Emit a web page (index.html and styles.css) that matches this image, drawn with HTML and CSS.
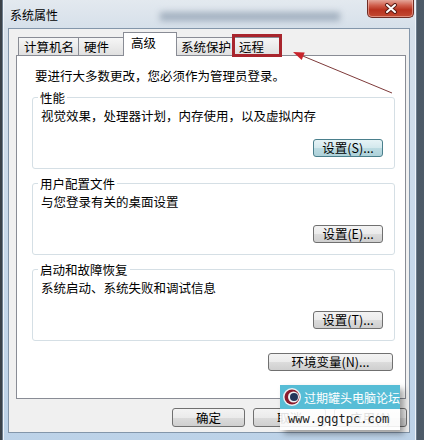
FILE: index.html
```html
<!DOCTYPE html>
<html lang="zh-CN">
<head>
    <meta charset="UTF-8">
    <meta name="viewport" content="width=device-width, initial-scale=1.0">
    <title>系统属性</title>
    <link rel="stylesheet" href="styles.css">
</head>
<body>
    <div class="window">
        <div class="titlebar">
            <span class="title">系统属性</span>
            <span class="smear"></span>
            <div class="close">
                <svg width="14" height="11" viewBox="0 0 14 11">
                    <path d="M3 2 L11 9 M11 2 L3 9" stroke="#5a1d16" stroke-width="4" stroke-linecap="round"/>
                    <path d="M3 2 L11 9 M11 2 L3 9" stroke="#fff" stroke-width="2" stroke-linecap="round"/>
                </svg>
            </div>
        </div>

        <div class="client">
            <div class="tabs">
                <div class="tab t1">计算机名</div>
                <div class="tab t2">硬件</div>
                <div class="tab t3 active">高级</div>
                <div class="tab t4">系统保护</div>
                <div class="tab t5 marked">远程</div>
            </div>

            <div class="panel">
                <p class="note">要进行大多数更改，您必须作为管理员登录。</p>

                <fieldset class="group">
                    <legend>性能</legend>
                    <p>视觉效果，处理器计划，内存使用，以及虚拟内存</p>
                    <div class="row"><button class="btn focus">设置(S)...</button></div>
                </fieldset>

                <fieldset class="group">
                    <legend>用户配置文件</legend>
                    <p>与您登录有关的桌面设置</p>
                    <div class="row"><button class="btn">设置(E)...</button></div>
                </fieldset>

                <fieldset class="group">
                    <legend>启动和故障恢复</legend>
                    <p>系统启动、系统失败和调试信息</p>
                    <div class="row"><button class="btn">设置(T)...</button></div>
                </fieldset>

                <div class="row env"><button class="btn wide">环境变量(N)...</button></div>
            </div>

            <div class="actions">
                <button class="btn">确定</button>
                <button class="btn">取消</button>
                <button class="btn">应用(A)</button>
            </div>
        </div>

        <!-- annotation arrow pointing at the remote tab -->
        <svg class="arrow" width="415" height="440" viewBox="0 0 415 440">
            <line x1="390" y1="93" x2="296" y2="54" stroke="#7e3a3a" stroke-width="1"/>
            <polygon points="291,52 302.7,52.5 299.7,59.9" fill="#c8242c"/>
        </svg>

        <div class="watermark">
            <div class="wm-top">
                <svg width="20" height="20" viewBox="0 0 20 20">
                    <circle cx="10" cy="10" r="9" fill="#eef2f4"/>
                    <circle cx="10" cy="10" r="7.5" fill="#8a1c2c"/>
                    <circle cx="11.5" cy="10" r="5.5" fill="#eef2f4"/>
                    <circle cx="12" cy="10" r="4" fill="#24365a"/>
                </svg>
                <span>过期罐头电脑论坛</span>
            </div>
            <div class="wm-bottom">www.gqgtpc.com</div>
        </div>
    </div>
</body>
</html>
```

FILE: styles.css
```css
body {
    margin: 0;
    height: 440px;
    overflow: hidden;
    background: linear-gradient(to right, #3b4249 0, #3b4249 50%, #4d5b68 100%);
    font-family: "Noto Sans CJK SC", "Noto Sans", sans-serif;
    font-size: 12.5px;
    color: #000;
}

.window {
    position: relative;
    margin-left: 2px;
    width: 415px;
    height: 448px;
    box-sizing: border-box;
    padding: 0 7px 0 6px;
    background: linear-gradient(to bottom, #e3e9ef 0, #d6e0ea 28px, #c6d8ea 60%, #bcd2e8 100%);
    box-shadow: inset 1px 0 #6d7d8d, inset -1px 0 #6d7d8d, inset 2px 0 #eef4fa, inset -2px 0 #eef4fa;
}

.titlebar {
    display: flex;
    align-items: center;
    height: 28px;
    margin-right: -7px;
    padding-left: 2px;
}

.title {
    font-size: 12px;
    line-height: 15px;
}

.smear {
    width: 180px;
    height: 9px;
    margin-left: 102px;
    margin-top: 5px;
    background: rgba(96, 116, 140, 0.45);
    filter: blur(3px);
}

.close {
    align-self: flex-start;
    margin-top: -1px;
    margin-left: auto;
    margin-right: 3px;
    width: 47px;
    height: 19px;
    box-sizing: border-box;
    border: 1px solid #6e2c24;
    border-top: none;
    border-radius: 0 0 5px 5px;
    background: linear-gradient(to bottom, #e8b3a8 0, #d0604e 35%, #b8321f 60%, #c24a32 100%);
    box-shadow: inset 0 0 0 1px rgba(255, 210, 200, 0.5);
    display: flex;
    align-items: center;
    justify-content: center;
}

.client {
    width: 402px;
    height: 405px;
    box-sizing: border-box;
    border: 1px solid #8396aa;
    background: #f0f0f0;
}

.tabs {
    display: flex;
    align-items: flex-end;
    height: 26px;
    padding-left: 9px;
}

.tab {
    position: relative;
    height: 18px;
    box-sizing: border-box;
    border: 1px solid #898c95;
    border-bottom: none;
    padding-left: 5px;
    line-height: 17px;
    white-space: nowrap;
    background: linear-gradient(to bottom, #f6f6f6 0, #ebebeb 50%, #e0e0e0 100%);
}

.tab + .tab {
    margin-left: -1px;
}

.t1 { width: 61px; }
.t2 { width: 46px; }
.t3 { width: 54px; }
.t4 { width: 58px; padding-left: 4px; }
.t5 { width: 49px; }

.tab.active {
    height: 24px;
    margin-bottom: -1px;
    padding-top: 2px;
    padding-left: 7px;
    line-height: 16px;
    background: #fff;
    z-index: 1;
}

/* red highlight drawn round the remote tab */
.tab.marked::after {
    content: "";
    position: absolute;
    top: -4px;
    left: -2px;
    right: -1px;
    bottom: -2px;
    border: 3px solid #a8252d;
}

.panel {
    margin-left: 7px;
    width: 390px;
    height: 344px;
    box-sizing: border-box;
    border: 1px solid #898c95;
    background: #fff;
    padding: 12px 12px 0 18px;
    line-height: 15px;
}

.panel p {
    margin: 0;
}

.group {
    width: 363px;
    box-sizing: border-box;
    margin: 7px 0 0 -3px;
    padding: 3px 11px 11px 8px;
    border: 1px solid #d5dfe5;
    border-radius: 3px;
    min-inline-size: 0;
}

.group legend {
    margin-left: -3px;
    padding: 0 2px;
    line-height: 15px;
}

.row {
    display: flex;
    justify-content: flex-end;
}

.group .row {
    margin-top: 16px;
}

.env {
    margin-top: 12px;
}

.btn {
    width: 70px;
    height: 18px;
    padding: 0;
    border: 1px solid #707070;
    border-radius: 3px;
    background: linear-gradient(to bottom, #f3f3f3 0, #ebebeb 50%, #dcdcdc 50%, #cfcfcf 100%);
    font-family: "Noto Sans CJK SC", "Noto Sans", sans-serif;
    font-size: 12.5px;
    line-height: 16px;
    color: #000;
    white-space: nowrap;
}

.btn.focus {
    border-color: #4a7f8c;
    background: linear-gradient(to bottom, #e6f3f6 0, #d3e8ed 50%, #bcdbe2 50%, #add1d9 100%);
}

.btn.wide {
    width: 125px;
}

.actions {
    display: flex;
    justify-content: flex-end;
    gap: 8px;
    margin-top: 9px;
    padding-right: 2px;
}

.actions .btn {
    width: 73px;
    height: 19px;
}

.arrow {
    position: absolute;
    left: 0;
    top: 0;
    pointer-events: none;
}

.watermark {
    position: absolute;
    left: 278px;
    top: 385px;
    width: 120px;
    box-shadow: 4px 4px 6px rgba(0, 0, 0, 0.35);
}

.wm-top {
    display: flex;
    align-items: center;
    gap: 2px;
    height: 24px;
    padding-left: 2px;
    background: #57bdd6;
    color: #fff;
    font-size: 12px;
    white-space: nowrap;
}

.wm-bottom {
    height: 21px;
    line-height: 21px;
    padding-left: 8px;
    background: rgba(255, 255, 255, 0.88);
    font-family: "DejaVu Sans Mono", monospace;
    font-size: 12px;
    color: #222;
}
```
